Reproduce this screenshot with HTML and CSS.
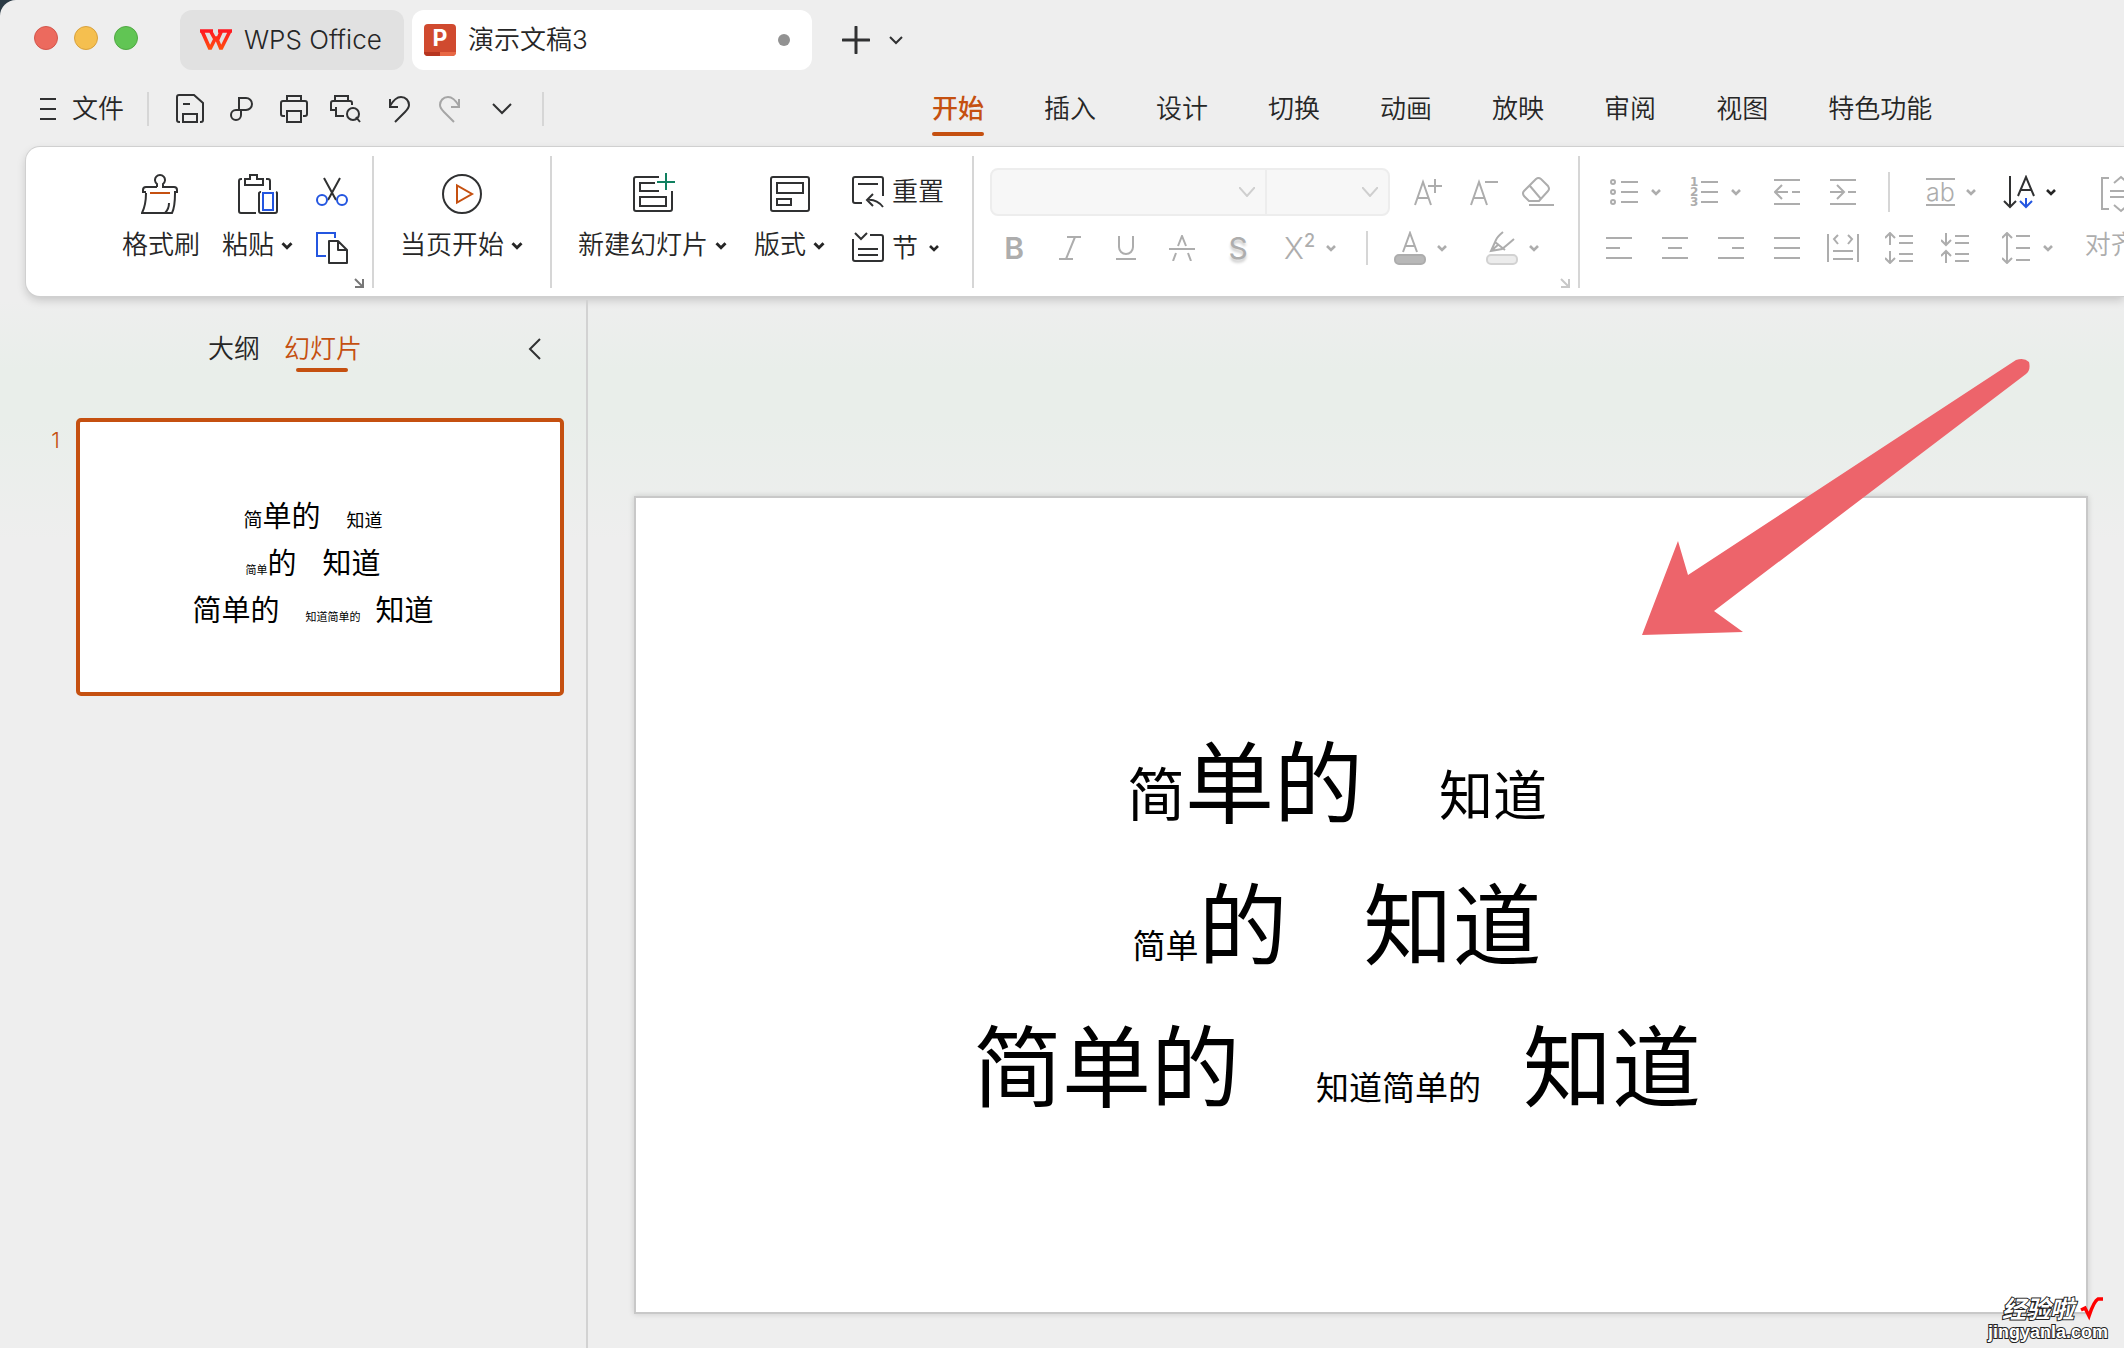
FILE: index.html
```html
<!DOCTYPE html>
<html lang="zh-CN">
<head>
<meta charset="utf-8">
<title>演示文稿3 - WPS Office</title>
<link rel="stylesheet" href="styles.css">
</head>
<body>
<svg class="defs" aria-hidden="true">
  <defs>
    <linearGradient id="wps" x1="0" y1="0" x2="0" y2="1"><stop offset="0" stop-color="#ff1a22"/><stop offset="1" stop-color="#ff4d0d"/></linearGradient>
    <symbol id="chev" viewBox="0 0 12 8"><path d="M2 2l4 4 4-4" fill="none" stroke="currentColor" stroke-width="2.6"/></symbol>
    <symbol id="launch" viewBox="0 0 10 10"><path d="M1 1l8 8M9 1v8H1" fill="none" stroke="currentColor" stroke-width="2"/></symbol>
  </defs>
</svg>
<div class="window">
  <header class="titlebar">
    <div class="lights"><span class="light red"></span><span class="light yellow"></span><span class="light green"></span></div>
    <button class="tab home">
      <svg width="32" height="24" viewBox="0 0 32 24"><path d="M0 3H13M18 3H32M2 3L10 21L16 9L21 21L30 3M11 4l5 9M21 4l-4 9" fill="none" stroke="url(#wps)" stroke-width="3.600" stroke-linejoin="bevel"/></svg>
      <span>WPS Office</span>
    </button>
    <button class="tab doc">
      <svg width="32" height="32" viewBox="0 0 32 32"><rect width="32" height="32" rx="4" fill="#d04a2f"/><path d="M0 28h16v4H4a4 4 0 0 1-4-4z" fill="#b63520"/><path d="M16 28h16a4 4 0 0 1-4 4H16z" fill="#e86845"/><text x="16" y="22" text-anchor="middle" class="logo-p">P</text></svg>
      <span>演示文稿3</span>
      <span class="dirty"></span>
    </button>
    <button class="plain add" aria-label="新建"><svg width="28" height="28" viewBox="0 0 28 28"><path d="M14 1v26M1 14h26" class="s3"/></svg></button>
    <button class="plain" aria-label="更多标签"><svg width="16" height="10" viewBox="0 0 16 10"><path d="M2 2l6 6 6-6" class="s2"/></svg></button>
  </header>

  <div class="menubar">
    <button class="plain file"><svg width="16" height="24" viewBox="0 0 16 24"><path d="M0 2h16M0 12h16M0 22h16" class="s2"/></svg><span>文件</span></button>
    <i class="rule short"></i>
    <div class="quick">
      <button class="plain" aria-label="保存"><svg width="28" height="30" viewBox="0 0 28 30"><path d="M4 28H3a2 2 0 0 1-2-2V3a2 2 0 0 1 2-2h15l9 8v17a2 2 0 0 1-2 2h-1M7 10h7M7 28v-8h14v8z" class="s2"/></svg></button>
      <button class="plain" aria-label="输出"><svg width="24" height="26" viewBox="0 0 24 26"><path d="M9 13V2h7a6 6 0 0 1 0 12H6a5 5 0 1 0 5 5v-4" class="s2"/></svg></button>
      <button class="plain" aria-label="打印"><svg width="28" height="30" viewBox="0 0 28 30"><path d="M7 6V2h14v4M5 22H3a2 2 0 0 1-2-2V9a2 2 0 0 1 2-2h22a2 2 0 0 1 2 2v11a2 2 0 0 1-2 2h-2M7 17h14v11H7z" class="s2"/></svg></button>
      <button class="plain" aria-label="打印预览"><svg width="32" height="30" viewBox="0 0 32 30"><path d="M5 6V2h13v4M5 16H1V9a2 2 0 0 1 2-2h17a2 2 0 0 1 2 2v2M6 13v9h8M30 28l-4-5" class="s2"/><circle cx="23" cy="20" r="6" class="s2"/></svg></button>
      <button class="plain" aria-label="撤销"><svg width="22" height="28" viewBox="0 0 22 28"><path d="M2 4v8h8M2 11C6 4 10 2 13 2c5 0 8 4 8 8 0 3-2 5-4 7L7 27" class="s2"/></svg></button>
      <button class="plain" aria-label="恢复" disabled><svg width="22" height="28" viewBox="0 0 22 28"><path d="M20 4v8h-8M20 11C16 4 12 2 9 2 4 2 1 6 1 10c0 3 2 5 4 7l10 10" class="s2"/></svg></button>
      <button class="plain" aria-label="更多"><svg width="20" height="12" viewBox="0 0 20 12"><path d="M1 1l9 9 9-9" class="s2"/></svg></button>
    </div>
    <i class="rule short"></i>
    <nav class="menus">
      <a href="#" class="active">开始</a><a href="#">插入</a><a href="#">设计</a><a href="#">切换</a><a href="#">动画</a><a href="#">放映</a><a href="#">审阅</a><a href="#">视图</a><a href="#">特色功能</a>
    </nav>
  </div>

  <section class="ribbon" aria-label="开始">
    <div class="group clipboard">
      <button class="big">
        <svg width="40" height="40" viewBox="0 0 40 40"><path d="M16 13V10a5 5 0 1 1 6 0v3h11a3 3 0 0 1 3 3v2h-3M16 13H5a3 3 0 0 0-3 3v2h3M5 19c0 8-1 14-4 20h30c3-6 3-12 3-20M24 39c2-2 4-6 4-10" class="s2"/><path d="M9 19h20" class="s2 orange"/></svg>
        <span>格式刷</span>
      </button>
      <button class="big">
        <svg width="40" height="40" viewBox="0 0 40 40"><path d="M4 5H3a2 2 0 0 0-2 2v30a2 2 0 0 0 2 2h15M28 5h2a2 2 0 0 1 2 2v9M7 11V5h5V1h7v4h6v6zM23 18a2 2 0 0 0-2 1v18a2 2 0 0 0 2 2h14a2 2 0 0 0 2-2V19a2 2 0 0 0-1-1" class="s2"/><path d="M25 19h10v17H25z" class="s2 blue"/></svg>
        <span>粘贴<svg class="chev"><use href="#chev"/></svg></span>
      </button>
      <div class="stack">
        <button class="plain" aria-label="剪切"><svg width="32" height="32" viewBox="0 0 32 32"><path d="M8 2l12 22M24 2L12 24" class="s2"/><circle cx="6" cy="24" r="5" class="s2 blue"/><circle cx="26" cy="24" r="5" class="s2 blue"/></svg></button>
        <button class="plain" aria-label="复制"><svg width="32" height="32" viewBox="0 0 32 32"><path d="M10 24H1V1h18v5" class="s2 blue"/><path d="M13 9h9l9 9v13H13zM22 9v9h9" class="s2" stroke-linejoin="round"/></svg></button>
      </div>
      <button class="plain launcher" aria-label="剪贴板设置"><svg width="10" height="10"><use href="#launch"/></svg></button>
    </div>
    <i class="rule"></i>
    <div class="group play">
      <button class="big">
        <svg width="40" height="40" viewBox="0 0 40 40"><circle cx="20" cy="20" r="19" class="s2"/><path d="M15 11.500v17L30 20z" class="s2 orange"/></svg>
        <span>当页开始<svg class="chev"><use href="#chev"/></svg></span>
      </button>
    </div>
    <i class="rule"></i>
    <div class="group slides">
      <button class="big">
        <svg class="over" width="40" height="40" viewBox="0 0 40 40"><path d="M26 3H3a2 2 0 0 0-2 2v30a2 2 0 0 0 2 2h34a2 2 0 0 0 2-2V17M22 9H7v8h19M7 23h26v9H7z" class="s2"/><path d="M33-1v17M24 8h18" class="s2 teal"/></svg>
        <span>新建幻灯片<svg class="chev"><use href="#chev"/></svg></span>
      </button>
      <button class="big">
        <svg width="40" height="40" viewBox="0 0 40 40"><rect x="1" y="3" width="38" height="34" rx="2" class="s2"/><path d="M7 9h26v10H7zM7 25h14v6H7z" class="s2"/></svg>
        <span>版式<svg class="chev"><use href="#chev"/></svg></span>
      </button>
      <div class="stack">
        <button class="plain side"><svg width="32" height="32" viewBox="0 0 32 32"><path d="M10 27H3a2 2 0 0 1-2-2V3a2 2 0 0 1 2-2h26a2 2 0 0 1 2 2v17M6 8h20M21 18l-6 6 6 6M15 24c7-1 12 2 16 7" class="s2"/></svg><span>重置</span></button>
        <button class="plain side"><svg width="32" height="32" viewBox="0 0 32 32"><path d="M1 7v20a2 2 0 0 0 2 2h26a2 2 0 0 0 2-2V5a2 2 0 0 0-2-2H18M3 1l6 6 6-6M6 17h20M6 23h20" class="s2"/></svg><span>节</span><svg class="chev"><use href="#chev"/></svg></button>
      </div>
    </div>
    <i class="rule"></i>
    <div class="group font rows off">
      <div class="row">
        <div class="combo">
          <select class="family" aria-label="字体" disabled></select><select class="size" aria-label="字号" disabled></select>
        </div>
        <button class="slot" aria-label="增大字号" disabled><svg width="28" height="28" viewBox="0 0 28 28"><path d="M1 27L9 4l8 23M4 20h10M21 1v14M14 8h14" class="s2"/></svg></button>
        <button class="slot" aria-label="减小字号" disabled><svg width="28" height="28" viewBox="0 0 28 28"><path d="M1 27L9 4l8 23M4 20h10M15 4h13" class="s2"/></svg></button>
        <button class="slot narrow" aria-label="清除格式" disabled><svg width="32" height="30" viewBox="0 0 32 30"><path d="M14 2q2-2 5 0l7 7q2 3 0 5l-9 10H7l-5-5q-2-3 0-5zM8 9l11 13M7 28h25" class="s2"/></svg></button>
      </div>
      <div class="row">
        <button class="slot" aria-label="加粗" disabled><b class="glyph">B</b></button>
        <button class="slot" aria-label="倾斜" disabled><svg width="24" height="24" viewBox="0 0 24 24"><path d="M9 1h14M1 23h14M17 1L8 23" class="s2"/></svg></button>
        <button class="slot" aria-label="下划线" disabled><svg width="20" height="24" viewBox="0 0 20 24"><path d="M3 0v11a7 7 0 0 0 14 0V0M0 23h20" class="s2"/></svg></button>
        <button class="slot" aria-label="删除线" disabled><svg width="26" height="26" viewBox="0 0 26 26"><path d="M9 11l4-10 4 10M0 14h26M7 18l-3 8M19 18l3 8" class="s2"/></svg></button>
        <button class="slot" aria-label="阴影" disabled><span class="glyph shade">S</span></button>
        <button class="drop script" aria-label="上标" disabled><span class="glyph thin">X<sup>2</sup></span><svg class="chev"><use href="#chev"/></svg></button>
        <i class="rule short"></i>
        <button class="drop color" aria-label="字体颜色" disabled><svg width="32" height="34" viewBox="0 0 32 34"><path d="M9 21l7-19 7 19M11 15h10" class="s2"/><rect x="1" y="24" width="30" height="9" rx="4" fill="#b8b8b8" stroke="#adadad" stroke-width="2"/></svg><svg class="chev"><use href="#chev"/></svg></button>
        <button class="drop mark" aria-label="突出显示" disabled><svg width="32" height="34" viewBox="0 0 32 34"><path d="M17 1q-6 5-7 8L5 20l11-2q4-3 12-10M9 11l10 8M5 20l8-7" class="s2"/><rect x="1" y="24" width="30" height="9" rx="4" fill="#ececec" stroke="#d2d2d2" stroke-width="2"/></svg><svg class="chev"><use href="#chev"/></svg></button>
      </div>
      <button class="plain launcher" aria-label="字体设置" disabled><svg width="10" height="10"><use href="#launch"/></svg></button>
    </div>
    <i class="rule"></i>
    <div class="group para off">
      <div class="rows">
        <div class="row">
          <button class="drop first" aria-label="项目符号" disabled><svg width="28" height="30" viewBox="0 0 28 30"><path d="M11 5h17M11 15h17M11 25h17" class="s2"/><circle cx="3" cy="5" r="2" class="s2"/><circle cx="3" cy="15" r="2" class="s2"/><circle cx="3" cy="25" r="2" class="s2"/></svg><svg class="chev"><use href="#chev"/></svg></button>
          <button class="drop next" aria-label="编号" disabled><svg class="over" width="28" height="30" viewBox="0 0 28 30"><path d="M11 5h17M11 15h17M11 25h17" class="s2"/><text x="0" y="9" class="num">1</text><text x="0" y="19" class="num">2</text><text x="0" y="29" class="num">3</text></svg><svg class="chev"><use href="#chev"/></svg></button>
          <button class="slot indent" aria-label="减少缩进" disabled><svg width="26" height="26" viewBox="0 0 26 26"><path d="M0 1h26M0 25h26M8 6l-7 7 7 7M1 13h13M18 13h8" class="s2"/></svg></button>
          <button class="slot" aria-label="增加缩进" disabled><svg width="26" height="26" viewBox="0 0 26 26"><path d="M0 1h26M0 25h26M7 6l7 7-7 7M0 13h13M18 13h8" class="s2"/></svg></button>
          <i class="rule short tall"></i>
          <button class="drop ab" aria-label="字符间距" disabled><span class="overline">ab</span><svg class="chev"><use href="#chev"/></svg></button>
          <button class="drop dir" aria-label="文字方向"><svg width="32" height="34" viewBox="0 0 32 34"><path d="M7 1v31M1 26l6 6 6-6" class="s2"/><path d="M15 21l8-19 8 19M18 15h10" class="s2"/><path d="M23 23v9M17 26l6 6 6-6" class="s2 blue"/></svg><svg class="chev"><use href="#chev"/></svg></button>
        </div>
        <div class="row">
          <button class="slot" aria-label="左对齐" disabled><svg width="26" height="24" viewBox="0 0 26 24"><path d="M0 2h26M0 12h14M0 22h26" class="s2"/></svg></button>
          <button class="slot" aria-label="居中" disabled><svg width="26" height="24" viewBox="0 0 26 24"><path d="M0 2h26M6 12h14M0 22h26" class="s2"/></svg></button>
          <button class="slot" aria-label="右对齐" disabled><svg width="26" height="24" viewBox="0 0 26 24"><path d="M0 2h26M14 12h12M0 22h26" class="s2"/></svg></button>
          <button class="slot" aria-label="两端对齐" disabled><svg width="26" height="24" viewBox="0 0 26 24"><path d="M0 2h26M0 12h26M0 22h26" class="s2"/></svg></button>
          <button class="slot" aria-label="分散对齐" disabled><svg width="32" height="28" viewBox="0 0 32 28"><path d="M1 0v28M31 0v28M6 17h20M6 25h20M11 1L7 5l4 5M21 1l4 4-4 5" class="s2"/></svg></button>
          <button class="slot" aria-label="增大段距" disabled><svg width="28" height="32" viewBox="0 0 28 32"><path d="M14 4h14M14 11h14M14 22h14M14 29h14M5 13V2M0 6l5-5 5 5M5 19v11M0 26l5 5 5-5" class="s2"/></svg></button>
          <button class="slot" aria-label="减小段距" disabled><svg width="28" height="32" viewBox="0 0 28 32"><path d="M14 4h14M14 11h14M14 22h14M14 29h14M5 1v11M0 8l5 5 5-5M5 31V20M0 24l5-5 5 5" class="s2"/></svg></button>
          <button class="drop first" aria-label="行距" disabled><svg width="28" height="32" viewBox="0 0 28 32"><path d="M14 4h14M14 16h14M14 28h14M5 2v28M0 6l5-5 5 5M0 26l5 5 5-5" class="s2"/></svg><svg class="chev"><use href="#chev"/></svg></button>
        </div>
      </div>
      <button class="big align" disabled>
        <svg width="40" height="40" viewBox="0 0 40 40"><path d="M8 4H1v31h7M32 4h7v31h-7M9 17h22M9 23h22M13 9l7-6 7 6M13 31l7 6 7-6" class="s2"/></svg>
        <span>对齐<svg class="chev"><use href="#chev"/></svg></span>
      </button>
    </div>
  </section>

  <div class="workspace">
    <aside class="sidebar">
      <div class="panes">
        <a href="#">大纲</a><a href="#" class="active">幻灯片</a>
        <button class="plain collapse" aria-label="收起"><svg width="14" height="22" viewBox="0 0 14 22"><path d="M12 1L2 11l10 10" class="s2"/></svg></button>
      </div>
      <div class="entry">
        <span class="index">1</span>
        <div class="thumb">
          <div class="text">
            <p><span class="m">简</span><span class="l">单的</span><span class="m2 gap">知道</span></p>
            <p><span class="s">简单</span><span class="l">的</span><span class="l gap">知道</span></p>
            <p><span class="l">简单的</span><span class="s gap">知道简单的</span><span class="l near">知道</span></p>
          </div>
        </div>
      </div>
    </aside>
    <main class="stage">
      <div class="slide">
        <div class="text">
          <p><span class="m">简</span><span class="l">单的</span><span class="m2 gap">知道</span></p>
          <p><span class="s">简单</span><span class="l">的</span><span class="l gap">知道</span></p>
          <p><span class="l">简单的</span><span class="s gap">知道简单的</span><span class="l near">知道</span></p>
        </div>
      </div>
      <svg class="arrow" width="392" height="280" viewBox="0 0 392 280"><path d="M2 277L38 183L48 217L376 2Q384-1 389 4Q391 12 386 16L74 253L103 274Z" fill="#ed646b"/></svg>
    </main>
  </div>
  <div class="watermark">
    <div class="brand"><span>经验啦</span><svg width="24" height="24" viewBox="0 0 24 24"><path d="M1 13l4-2 4 8Q14 4 18 2h5" fill="none" stroke="#f00" stroke-width="3.500"/></svg></div>
    <div class="site">jingyanla.com</div>
  </div>
</div>
</body>
</html>
```
FILE: styles.css
```css
* { box-sizing: border-box; }
body {
  margin: 0;
  background: #2b3a45;
  font-family: Inter, "Noto Sans CJK SC", sans-serif;
  font-size: 26px;
  font-weight: 350;
  line-height: 34px;
  color: #262626;
}
button, select { font: inherit; color: inherit; border: 0; padding: 0; background: none; }
a { color: inherit; text-decoration: none; }
p { margin: 0; }
svg { display: block; flex: none; }
.defs { position: absolute; width: 0; height: 0; }

.window {
  position: relative;
  display: flex;
  flex-direction: column;
  min-height: 100vh;
  overflow: hidden;
  border-top-left-radius: 16px;
  background: linear-gradient(#eeeeee 0, #eeeeee 300px, #e9eeea 370px, #e9eeea 420px, #eeeeee 540px);
}

.s2, .s3 { fill: none; stroke: #303132; stroke-width: 2; }
.s3 { stroke-width: 3; stroke-linecap: round; }
.blue { stroke: #2456e0; }
.orange { stroke: #c55010; }
.teal { stroke: #108060; }
.chev { width: 12px; height: 8px; }

.plain, .slot, .drop, .big { display: flex; align-items: center; }
.rule { flex: none; width: 2px; height: 132px; background: #d6d6d6; }
.rule.short { height: 34px; }
.rule.tall { height: 40px; }

/* title bar */
.titlebar { display: flex; align-items: center; height: 70px; padding: 10px 0 0 34px; }
.lights { display: flex; gap: 16px; width: 146px; height: 60px; padding-top: 16px; }
.light { width: 24px; height: 24px; border-radius: 50%; border: 1px solid; }
.red { background: #ec6a5e; border-color: #d3564c; }
.yellow { background: #f5bf4f; border-color: #d8a13d; }
.green { background: #61c554; border-color: #50a843; }
.tab { display: flex; align-items: center; height: 60px; border-radius: 12px; gap: 12px; }
.home { width: 224px; padding-left: 20px; background: #e1e1e1; }
.doc { width: 400px; margin-left: 8px; padding: 0 22px 0 12px; background: #fff; }
.dirty { width: 12px; height: 12px; margin-left: auto; border-radius: 50%; background: #929292; }
.logo-p { font: bold 23px Inter, sans-serif; fill: #fff; }
.add { margin: 0 18px 0 30px; }

/* menu bar */
.menubar { display: flex; align-items: center; height: 77px; padding-left: 40px; }
.file { gap: 16px; margin-right: 23px; }
.quick { display: flex; align-items: center; gap: 26px; margin: 0 30px 0 27px; }
.quick .plain:nth-child(4) { margin-left: -4px; }
.quick .plain:nth-child(6) { margin-left: 3px; }
.quick .plain:nth-child(7) { margin-left: 5px; }
.plain:disabled .s2 { stroke: #a5a5a5; }
.menus { display: flex; gap: 60px; margin-left: 388px; white-space: nowrap; }
.menus a { padding: 10px 0; }
.menus .active, .panes .active { position: relative; color: #c55010; }
.menus .active { font-weight: 500; }
.menus .active::after, .panes .active::after {
  content: "";
  position: absolute;
  left: 0; right: 0; bottom: 0;
  height: 4px;
  border-radius: 2px;
  background: #c55010;
}

/* ribbon */
.ribbon {
  display: flex;
  align-items: center;
  height: 149px;
  margin-left: 26px;
  border-radius: 14px 0 0 14px;
  background: #fff;
  box-shadow: 0 0 0 1px #d0d0d0, 0 4px 10px rgba(0, 0, 0, .18);
  white-space: nowrap;
}
.group { position: relative; display: flex; flex: none; height: 100%; }
.big { flex-direction: column; gap: 14px; height: 116px; margin-top: 27px; }
.big span { display: flex; align-items: center; gap: 6px; }
.big .chev { width: 14px; height: 9px; }
.over { overflow: visible; }
.stack { display: flex; flex-direction: column; margin-top: 17px; }
.stack .plain { height: 56px; }
.side { gap: 8px; }
.side .chev { margin-left: 2px; }
.launcher { position: absolute; right: 8px; bottom: 8px; color: #777; }
.launcher:disabled { color: #c8c8c8; }
.clipboard { width: 346px; padding-left: 96px; gap: 22px; }
.play { padding: 0 26px; }
.slides { padding: 0 28px 0 26px; gap: 26px; }
.off { color: #adadad; }
.off .s2 { stroke: #adadad; }
.rows { display: flex; flex-direction: column; padding-top: 17px; }
.row { display: flex; align-items: center; height: 56px; }
.slot { justify-content: center; width: 56px; height: 56px; }
.narrow { width: 52px; }
.drop { gap: 10px; height: 56px; }
.font { width: 604px; padding-left: 12px; }
.combo {
  display: flex;
  width: 400px; height: 48px;
  margin: 0 10px 0 4px;
  border: 2px solid #ededed;
  border-radius: 8px;
  background: #f7f7f7;
}
.combo select {
  appearance: none;
  opacity: 1;
  background: no-repeat right 10px center url("data:image/svg+xml,%3Csvg xmlns='http://www.w3.org/2000/svg' width='16' height='10'%3E%3Cpath d='M0 0l8 9 8-9' fill='none' stroke='%23cfcfcf' stroke-width='2'/%3E%3C/svg%3E");
}
.family { flex: 1; border-right: 2px solid #ededed; }
.size { width: 121px; }
.glyph { font-size: 30px; font-weight: 400; }
b.glyph { font-weight: 600; }
.shade { text-shadow: 0 3px 3px #c8c8c8; }
.thin { display: flex; font-weight: 300; }
.glyph sup { font-size: 18px; line-height: 20px; font-weight: 500; }
.script { width: 100px; padding-left: 18px; }
.color { padding-left: 26px; }
.mark { padding-left: 38px; }
.para { padding-left: 11px; }
.first, .next { gap: 12px; }
.first { padding-left: 19px; }
.next { padding-left: 28px; }
.indent { margin-left: 17px; }
.rule.tall { margin-left: 17px; }
.num { font: bold 12px "DejaVu Sans", sans-serif; fill: #adadad; }
.ab { padding-left: 36px; gap: 10px; }
.overline { border: solid #adadad; border-width: 2px 0; line-height: 24px; height: 28px; font-size: 25px; }
.dir { padding-left: 26px; color: #262626; }
.dir .s2:not(.blue) { stroke: #303132; }
.dir .blue { stroke: #2456e0; }
.align { margin-left: 28px; }

/* slide list */
.workspace { display: flex; flex: 1; padding-top: 4px; }
.sidebar { flex: none; width: 588px; border-right: 2px solid #d2d2d2; }
.panes { display: flex; gap: 24px; padding: 32px 44px 0 208px; height: 118px; align-items: flex-start; }
.panes .active::after { left: 12px; right: 14px; bottom: -6px; }
.collapse { height: 34px; margin-left: auto; }
.entry { display: flex; padding-right: 22px; }
.index { width: 76px; padding: 5px 16px 0 0; text-align: right; color: #c55010; font-size: 22px; }
.thumb {
  display: flex;
  align-items: center;
  flex: 1;
  height: 278px;
  border: 4px solid #c55010;
  border-radius: 5px;
  background: #fff;
}

/* slide canvas */
.stage { position: relative; flex: 1; padding: 196px 36px 32px 46px; }
.slide {
  display: flex;
  align-items: center;
  aspect-ratio: 16 / 9;
  border: 2px solid #c8c8c8;
  background: #fff;
  box-shadow: 0 0 6px rgba(0, 0, 0, .15);
}
.text { flex: 1; color: #000; text-align: center; white-space: nowrap; font-family: "Noto Sans CJK SC", sans-serif; font-weight: 400; }
.slide .text { padding: 30px 48px 0 0; }
.slide p { height: 142px; line-height: 142px; }
.slide .l { font-size: 89px; }
.slide .m { font-size: 58px; }
.slide .m2 { font-size: 54px; }
.slide .s { font-size: 33px; }
.slide .gap { margin-left: 76px; }
.slide .near { margin-left: 42px; }
.thumb .text { padding: 9px 14px 0 0; }
.thumb p { height: 47px; line-height: 47px; }
.thumb .l { font-size: 29px; }
.thumb .m { font-size: 19px; }
.thumb .m2 { font-size: 18px; }
.thumb .s { font-size: 11px; }
.thumb .gap { margin-left: 26px; }
.thumb .near { margin-left: 15px; }
.arrow { position: absolute; left: 1052px; top: 58px; }

/* corner mark */
.watermark {
  position: absolute;
  right: 16px; bottom: 7px;
  color: #fff;
  font: bold 18px/18px "Liberation Sans", "Noto Sans CJK SC", sans-serif;
  -webkit-text-stroke: 2px #222;
  paint-order: stroke fill;
}
.brand { display: flex; justify-content: flex-end; gap: 6px; padding-right: 4px; font-size: 24px; line-height: 26px; font-style: italic; }
```
